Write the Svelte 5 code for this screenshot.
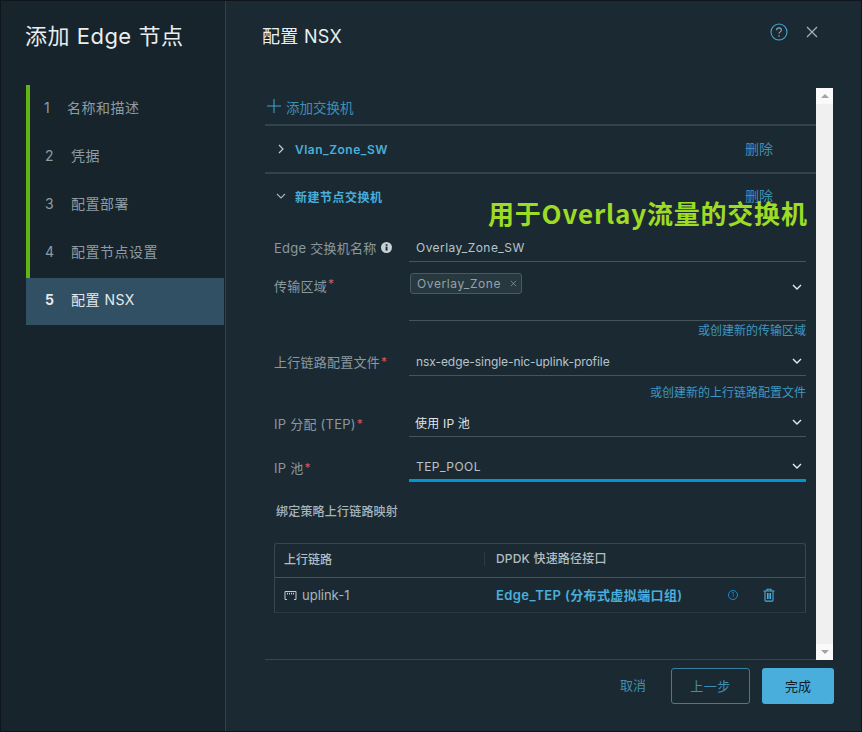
<script>
  const steps = [
    { n: 1, label: '名称和描述', gap: 'g1' },
    { n: 2, label: '凭据', gap: 'g2' },
    { n: 3, label: '配置部署', gap: 'g2' },
    { n: 4, label: '配置节点设置', gap: 'g2' }
  ];
</script>

<div class="wizard">
  <aside class="side">
    <h1>添加 Edge 节点</h1>
    <ol class="steps">
      {#each steps as s}
        <li class="step {s.gap}"><span class="num">{s.n}</span><span>{s.label}</span></li>
      {/each}
      <li class="step g2 active"><span class="num">5</span><span>配置 NSX</span></li>
    </ol>
  </aside>

  <main class="main">
    <header class="head">
      <h2>配置 NSX</h2>
      <div class="head-icons">
        <svg width="18" height="18" viewBox="0 0 18 18" fill="none">
          <circle cx="9" cy="9" r="8" stroke="#3fa9d6" stroke-width="1.1" />
          <path d="M6.6 7.2c0-1.5 1.1-2.3 2.4-2.3s2.4.8 2.4 2.1c0 1.9-2.4 1.9-2.4 3.7" stroke="#8fa3ad" stroke-width="1.1" />
          <circle cx="9" cy="13" r=".8" fill="#8fa3ad" />
        </svg>
        <svg width="12" height="12" viewBox="0 0 12 12" fill="none">
          <path d="M1 1l10 10M11 1L1 11" stroke="#a3afb5" stroke-width="1.3" />
        </svg>
      </div>
    </header>

    <div class="scroller">
      <div class="content">
        <div class="add-row">
          <svg width="14" height="14" viewBox="0 0 14 14" fill="none">
            <path d="M7 0v14M0 7h14" stroke="#3f9fc9" stroke-width="1.1" />
          </svg>
          <span>添加交换机</span>
        </div>

        <div class="switch-row first">
          <svg class="chev" width="8" height="10" viewBox="0 0 8 10" fill="none">
            <path d="M2 1l4 4-4 4" stroke="#c4ccd0" stroke-width="1.2" />
          </svg>
          <span class="switch-name">Vlan_Zone_SW</span>
          <span class="del">删除</span>
        </div>

        <div class="switch-row second">
          <svg class="chev" width="10" height="8" viewBox="0 0 10 8" fill="none">
            <path d="M1 2l4 4 4-4" stroke="#a9b4ba" stroke-width="1.1" />
          </svg>
          <span class="switch-name">新建节点交换机</span>
          <span class="del">删除</span>
        </div>

        <div class="form">
          <div class="field r-name">
            <span class="label">Edge 交换机名称
              <svg class="info" width="11" height="11" viewBox="0 0 11 11">
                <circle cx="5.5" cy="5.5" r="5.5" fill="#c9d0d4" />
                <rect x="4.6" y="4.6" width="1.9" height="4" fill="#1b2a32" />
                <rect x="4.6" y="2.2" width="1.9" height="1.6" fill="#1b2a32" />
              </svg>
            </span>
            <div class="control"><span class="wide">Overlay_Zone_SW</span></div>
          </div>

          <div class="field r-zone">
            <span class="label">传输区域<i>*</i></span>
            <div class="control zone">
              <span class="tag">Overlay_Zone
                <svg width="9" height="9" viewBox="0 0 9 9" fill="none">
                  <path d="M1 1l7 7M8 1L1 8" stroke="#8d9aa1" stroke-width="1" />
                </svg>
              </span>
              <svg class="down" width="10" height="7" viewBox="0 0 10 7" fill="none"><path d="M1 1l4 4 4-4" stroke="#e6eaec" stroke-width="1.4" /></svg>
            </div>
          </div>
          <a class="link l1" href="#zone">或创建新的传输区域</a>

          <div class="field r-uplink">
            <span class="label">上行链路配置文件 <i>*</i></span>
            <div class="control">
              <span class="narrow">nsx-edge-single-nic-uplink-profile</span>
              <svg class="down" width="10" height="7" viewBox="0 0 10 7" fill="none"><path d="M1 1l4 4 4-4" stroke="#e6eaec" stroke-width="1.4" /></svg>
            </div>
          </div>
          <a class="link l2" href="#profile">或创建新的上行链路配置文件</a>

          <div class="field r-ip">
            <span class="label">IP 分配 (TEP)<i>*</i></span>
            <div class="control">
              <span class="bright">使用 IP 池</span>
              <svg class="down" width="10" height="7" viewBox="0 0 10 7" fill="none"><path d="M1 1l4 4 4-4" stroke="#e6eaec" stroke-width="1.4" /></svg>
            </div>
          </div>

          <div class="field r-pool">
            <span class="label">IP 池 <i>*</i></span>
            <div class="control focus">
              <span class="wide">TEP_POOL</span>
              <svg class="down" width="10" height="7" viewBox="0 0 10 7" fill="none"><path d="M1 1l4 4 4-4" stroke="#e6eaec" stroke-width="1.4" /></svg>
            </div>
          </div>
        </div>

        <h3>绑定策略上行链路映射</h3>

        <div class="table">
          <div class="thead">
            <span class="c1">上行链路</span>
            <span class="c2">DPDK 快速路径接口</span>
          </div>
          <div class="tbody">
            <span class="c1 uplink">
              <svg width="13" height="12" viewBox="0 0 13 12" fill="none">
                <path d="M1 10.5V2.5h11v8M1 10.5h2M12 10.5h-2" stroke="#c3cbcf" stroke-width="1" />
                <path d="M3 4.6h7" stroke="#c3cbcf" stroke-width="1.6" stroke-dasharray="1 1" />
              </svg>
              uplink-1
            </span>
            <span class="c2 port">Edge_TEP (分布式虚拟端口组)</span>
            <span class="num-badge">1</span>
            <svg class="trash" width="12" height="14" viewBox="0 0 12 14" fill="none">
              <path d="M0.5 3h11M4 3V1.2h4V3M2 3v9.3c0 .5.3.8.8.8h6.4c.5 0 .8-.3.8-.8V3M4.5 5v6M6 5v6M7.5 5v6" stroke="#4badd9" stroke-width="1.1" />
            </svg>
          </div>
        </div>
      </div>

      <div class="scrollbar">
        <span class="arrow up"></span>
        <span class="arrow dn"></span>
      </div>
    </div>

    <footer class="foot">
      <span class="cancel">取消</span>
      <button class="btn prev">上一步</button>
      <button class="btn done">完成</button>
    </footer>

    <div class="note">用于Overlay流量的交换机</div>
  </main>
</div>

<style>
  :global(body) {
    margin: 0;
    background: #1b2a32;
  }

  .wizard {
    width: 862px;
    height: 732px;
    box-sizing: border-box;
    display: flex;
    border: 1px solid #0e161b;
    background: #1b2a32;
    overflow: hidden;
    font-family: "Inter", "Noto Sans CJK SC", sans-serif;
    font-size: 13px;
    color: #adbbc4;
  }

  .side {
    width: 224px;
    flex: none;
    background: #17242b;
    border-right: 1px solid #2c414c;
  }

  h1 {
    margin: 19px 0 0 24px;
    font-size: 22px;
    line-height: 32px;
    font-weight: 400;
    letter-spacing: .5px;
    color: #eaeef0;
    white-space: nowrap;
  }

  .steps {
    list-style: none;
    margin: 33px 1px 0 25px;
    padding: 0;
    border-left: 4px solid #60b515;
  }

  .step {
    height: 48px;
    box-sizing: border-box;
    padding-bottom: 4px;
    display: flex;
    align-items: center;
    color: #8d9ca5;
    font-size: 14px;
    letter-spacing: .5px;
  }

  .g1 .num { width: 23px; margin-left: 14px; }
  .g2 .num { width: 26px; margin-left: 15px; }

  .num {
    font-size: 14px;
  }

  .active {
    margin-left: -4px;
    padding-left: 4px;
    padding-bottom: 5px;
    background: #315063;
    color: #e4e9ec;
    height: 47px;
    margin-top: 1px;
    margin-bottom: -48px;
  }

  .active .num {
    font-weight: 700;
  }

  .main {
    flex: 1;
    min-width: 0;
    position: relative;
    display: flex;
    flex-direction: column;
  }

  .head {
    height: 87px;
    flex: none;
    display: flex;
    align-items: flex-start;
    justify-content: space-between;
  }

  h2 {
    margin: 22px 0 0 36px;
    font-size: 18px;
    line-height: 28px;
    font-weight: 400;
    letter-spacing: .3px;
    color: #eaeef0;
  }

  .head-icons {
    display: flex;
    align-items: center;
    gap: 18px;
    margin: 22px 43px 0 0;
  }

  .scroller {
    height: 571px;
    flex: none;
    margin-left: 39px;
    display: flex;
    border-bottom: 1px solid #37474f;
    margin-right: 28px;
  }

  .content {
    flex: 1;
    min-width: 0;
    overflow: hidden;
  }

  .add-row {
    display: flex;
    align-items: flex-end;
    padding: 0 0 8px 2px;
    box-sizing: border-box;
    gap: 5px;
    color: #3f8fb3;
    font-size: 13.5px;
    line-height: 15px;
    border-bottom: 2px solid #33434c;
    height: 38px;
  }

  .add-row svg {
    margin-bottom: 3px;
  }

  .switch-row {
    display: flex;
    align-items: center;
    box-sizing: border-box;
    padding-left: 11px;
  }

  .switch-row.first {
    height: 48px;
    border-bottom: 2px solid #33434c;
  }

  .switch-row.second {
    height: 44px;
  }

  .chev {
    width: 10px;
  }

  .switch-name {
    margin-left: 9px;
    color: #49aedb;
    font-size: 12px;
    font-weight: 600;
    letter-spacing: .5px;
  }

  .del {
    margin-left: auto;
    margin-right: 43px;
    margin-bottom: 2px;
    color: #3f8fb3;
    font-size: 14px;
  }

  .form {
    padding: 15px 10px 0 9px;
    display: flex;
    flex-direction: column;
  }

  .field {
    display: flex;
    align-items: stretch;
  }

  .label {
    width: 135px;
    flex: none;
    display: flex;
    align-items: center;
    gap: 5px;
    white-space: nowrap;
    color: #8b989f;
    font-size: 13px;
    letter-spacing: .25px;
  }

  .label i {
    color: #d8565c;
    font-style: normal;
    font-size: 12px;
    margin-left: -4px;
  }

  .control {
    flex: 1;
    min-width: 0;
    display: flex;
    align-items: center;
    justify-content: space-between;
    padding: 0 4px 0 7px;
    border-bottom: 1px solid #46545c;
    color: #b9c4ca;
    font-size: 12px;
    letter-spacing: .2px;
  }

  .wide { letter-spacing: .45px; }
  .narrow { letter-spacing: -.07px; }

  .bright {
    color: #dfe4e7;
  }

  .r-name { height: 29px; }

  .r-zone { height: 59px; }
  .r-zone .label { align-items: flex-start; padding-top: 14px; height: 20px; }
  .zone { align-items: flex-start; padding-left: 1px; padding-top: 11px; }
  .zone .down { margin-top: 11px; }

  .tag {
    display: flex;
    align-items: center;
    justify-content: space-between;
    gap: 9px;
    width: 112px;
    height: 21px;
    box-sizing: border-box;
    padding: 0 4px 0 6px;
    border: 1px solid #4a5a63;
    border-radius: 3px;
    background: #28383f;
    color: #94a2a9;
    font-size: 12px;
    letter-spacing: .6px;
  }

  .link {
    align-self: flex-end;
    color: #3f97c1;
    font-size: 12px;
    line-height: 18px;
    text-decoration: none;
    box-sizing: border-box;
  }

  .l1 { height: 20px; padding-top: 1px; }
  .l2 { height: 32px; padding-top: 8px; }

  .r-uplink { height: 35px; }
  .r-uplink .control, .r-uplink .label { padding-top: 6px; }
  .r-ip { height: 29px; }
  .r-pool { height: 30px; margin-top: 15px; }
  .r-pool .control { padding-top: 2px; }
  .r-pool .label { padding-top: 1px; }
  .r-ip .control { padding-left: 6px; padding-top: 1px; }
  .r-ip .label { padding-top: 1px; }

  .focus {
    border-bottom: 3px solid #0095d3;
  }

  h3 {
    margin: 21px 0 0 11px;
    font-size: 12px;
    line-height: 18px;
    font-weight: 500;
    letter-spacing: .2px;
    color: #a9b5bc;
  }

  .table {
    margin: 22px 10px 0 9px;
    height: 70px;
    border: 1px solid #37474f;
    border-bottom-color: #2a3942;
    border-radius: 3px 3px 0 0;
    box-sizing: border-box;
  }

  .thead {
    height: 33px;
    display: flex;
    align-items: center;
    border-bottom: 1px solid #46545c;
    color: #b3bec4;
    font-size: 12px;
    font-weight: 500;
  }

  .thead span {
    position: relative;
    top: -2px;
  }

  .c1 {
    width: 200px;
    flex: none;
    padding-left: 9px;
  }

  .c2 {
    padding-left: 11px;
    border-left: 1px solid #2d3c44;
    line-height: 14px;
    letter-spacing: .2px;
  }

  .tbody {
    height: 34px;
    padding-bottom: 1px;
    display: flex;
    align-items: center;
  }

  .uplink {
    display: flex;
    align-items: center;
    gap: 5px;
    color: #aab6bc;
    font-size: 13px;
  }

  .port {
    border-left: 0;
    padding-left: 12px;
    color: #49aedb;
    font-size: 13px;
    font-weight: 600;
    letter-spacing: .4px;
    white-space: nowrap;
  }

  .num-badge {
    margin-left: auto;
    width: 10px;
    height: 10px;
    box-sizing: border-box;
    border: 1px solid #1a8ccb;
    border-radius: 50%;
    color: #1a8ccb;
    font-size: 6px;
    line-height: 8px;
    text-align: center;
  }

  .trash {
    margin: 0 30px 0 25px;
  }

  .scrollbar {
    width: 17px;
    flex: none;
    background: linear-gradient(#fafafa 0 16px, #f0f0f0 16px calc(100% - 16px), #fafafa calc(100% - 16px));
    display: flex;
    flex-direction: column;
    justify-content: space-between;
    align-items: center;
    padding: 6px 0;
    box-sizing: border-box;
    margin-bottom: -1px;
  }

  .arrow {
    width: 0;
    height: 0;
    border-left: 4px solid transparent;
    border-right: 4px solid transparent;
  }

  .up { border-bottom: 4px solid #a3a3a3; }
  .dn { border-top: 4px solid #a3a3a3; }

  .foot {
    flex: 1;
    display: flex;
    align-items: flex-start;
    justify-content: flex-end;
    padding: 8px 27px 0 0;
    gap: 12px;
  }

  .cancel {
    margin-right: 13px;
    line-height: 35px;
    color: #3f8fb3;
    font-size: 13px;
  }

  .btn {
    height: 36px;
    border-radius: 3px;
    font-family: inherit;
    font-size: 13px;
    padding: 0 0 2px;
  }

  .prev {
    width: 79px;
    border: 1px solid #3a7f9f;
    background: transparent;
    color: #3f8fb3;
    letter-spacing: .5px;
  }

  .done {
    width: 72px;
    border: 0;
    background: #49aedb;
    color: #111d24;
  }

  .note {
    position: absolute;
    left: 262px;
    top: 196px;
    font-size: 26px;
    line-height: 32px;
    font-weight: 700;
    letter-spacing: .8px;
    color: #9edb24;
    white-space: nowrap;
    font-family: "Noto Sans CJK SC", sans-serif;
  }
</style>
